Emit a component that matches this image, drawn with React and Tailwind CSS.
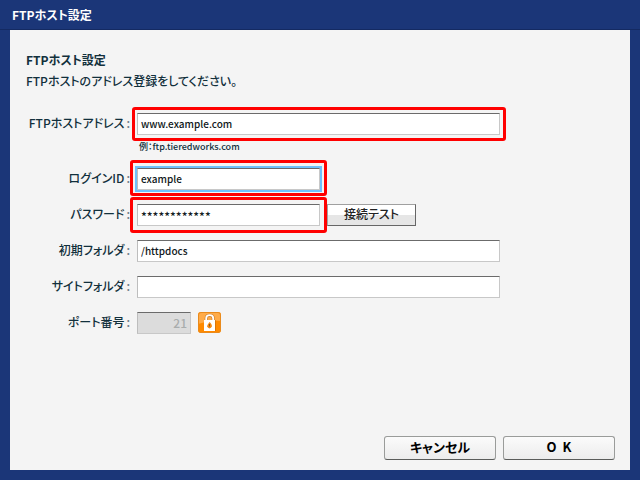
import React, { useState } from "react";

const inputClass =
  "block h-[22px] w-full border border-t-[#6b6b6b] border-l-[#bdbdbd] border-r-[#c8c8c8] border-b-[#c8c8c8] bg-white px-[3px] font-medium text-[#101820] outline-none";

const footerButtonClass =
  "h-6 w-28 rounded-[3px] border border-[#9a9c9a] border-b-[#5a5c5a] bg-linear-to-b from-[#fbfbfb] to-[#ececec] pb-1 text-[13px] leading-none font-bold text-black";

const Field = ({ id, label, hint, children }) => (
  <div className="grid grid-cols-[104px_1fr] gap-x-[7px]">
    <label htmlFor={id} className="text-right text-xs leading-5 font-medium whitespace-nowrap">
      {label}
      <span className="ml-0.5 text-[#6f8088]">:</span>
    </label>
    <div className="flex items-start gap-[7px]">{children}</div>
    {hint && <p className="col-start-2 pt-1 pl-0.5 text-[9px] leading-[15px] font-medium">{hint}</p>}
  </div>
);

const LockIcon = () => (
  <svg viewBox="0 0 23 21" className="h-[21px] w-[23px]" aria-hidden="true">
    <rect width="23" height="21" rx="3" fill="#ff8a00" />
    <path d="M3 0H20Q23 0 23 3V9Q12 8 0 12V3Q0 0 3 0Z" fill="#ffab48" />
    <rect x="0.5" y="0.5" width="22" height="20" rx="2.5" fill="none" stroke="#e98a1c" />
    <path d="M8.2 9V6.3Q8.2 3.2 11.7 3.2T15.2 6.3V9" fill="none" stroke="#a95b10" strokeWidth="3" opacity="0.6" />
    <path d="M8.2 9V6.3Q8.2 3.2 11.7 3.2T15.2 6.3V9" fill="none" stroke="#fff" strokeWidth="1.8" />
    <rect x="6" y="8" width="12" height="11" fill="#c06810" opacity="0.6" />
    <rect x="6" y="8" width="11" height="11" fill="#fff" />
    <path d="M11.5 10Q14.4 12.8 13.8 14.6Q13.2 16.4 11.5 16.4T9.2 14.6Q9.2 12.8 11.5 10Z" fill="#f58a14" />
    <path d="M11.5 12V14.5" stroke="#8d5a20" />
  </svg>
);

const App = () => {
  const [form, setForm] = useState({
    host: "www.example.com",
    login: "example",
    password: "************",
    folder: "/httpdocs",
    siteFolder: "",
    port: "21",
  });
  const [portLocked, setPortLocked] = useState(true);

  const handleChange = (e) => {
    setForm({ ...form, [e.target.name]: e.target.value });
  };

  return (
    <div className="flex min-h-screen flex-col bg-[#1b3678] px-2.5 pb-2.5 font-['Noto_Sans_CJK_JP',sans-serif] text-[#12303c] [font-feature-settings:'palt']">
      {/* Title Bar */}
      <header className="-mx-2.5 flex h-[30px] items-center border-b border-[#142a62] px-3">
        <h1 className="text-xs leading-5 font-bold text-white">FTPホスト設定</h1>
      </header>

      <form
        className="flex flex-1 flex-col bg-[#f4f4f4] px-4 pt-5 pb-2.5"
        onSubmit={(e) => e.preventDefault()}
      >
        <h2 className="text-xs leading-5 font-bold">FTPホスト設定</h2>
        <p className="text-xs leading-[22px] font-medium">FTPホストのアドレス登録をしてください。</p>

        {/* Fields */}
        <div className="mt-[21px] flex flex-col gap-3.5">
          <Field id="host" label="FTPホストアドレス" hint="例：ftp.tieredworks.com">
            <div className="relative w-[363px]">
              <input
                id="host"
                name="host"
                className={`${inputClass} pb-0.5 text-[10px]`}
                value={form.host}
                onChange={handleChange}
              />
              <span className="pointer-events-none absolute -inset-1.5 -left-[5px] rounded-[3px] border-3 border-[#ff0000]" />
            </div>
          </Field>

          <Field id="login" label="ログインID">
            <div className="relative w-[183px]">
              <input
                id="login"
                name="login"
                className={`${inputClass} pb-0.5 text-[10px] ring-2 ring-[#6fc0fb]`}
                value={form.login}
                onChange={handleChange}
              />
              <span className="pointer-events-none absolute -inset-[7px] -top-2 -bottom-1.5 rounded-[3px] border-3 border-[#ff0000]" />
            </div>
          </Field>

          <Field id="password" label="パスワード">
            <div className="relative z-10 w-[183px]">
              <input
                id="password"
                name="password"
                className={`${inputClass} text-xs font-bold`}
                value={form.password}
                onChange={handleChange}
              />
              <span className="pointer-events-none absolute -inset-[7px] rounded-[3px] border-3 border-[#ff0000]" />
            </div>
            <button
              type="button"
              className="h-[22px] w-[89px] border border-[#a0a0a0] border-r-[#666] border-b-[#666] bg-linear-to-b from-white from-50% to-[#e6e6e6] to-50% pb-0.5 text-xs leading-none font-medium text-[#222]"
            >
              接続テスト
            </button>
          </Field>

          <Field id="folder" label="初期フォルダ">
            <div className="w-[363px]">
              <input
                id="folder"
                name="folder"
                className={`${inputClass} pb-0.5 text-[10px]`}
                value={form.folder}
                onChange={handleChange}
              />
            </div>
          </Field>

          <Field id="siteFolder" label="サイトフォルダ">
            <div className="w-[363px]">
              <input
                id="siteFolder"
                name="siteFolder"
                className={`${inputClass} pb-0.5 text-[10px]`}
                value={form.siteFolder}
                onChange={handleChange}
              />
            </div>
          </Field>

          <Field id="port" label="ポート番号">
            <div className="w-[54px]">
              <input
                id="port"
                name="port"
                disabled={portLocked}
                className={`${inputClass} pb-0.5 text-right text-xs disabled:bg-[#dcdcdc] disabled:text-[#a9adad]`}
                value={form.port}
                onChange={handleChange}
              />
            </div>
            <button type="button" aria-label="ポート番号のロック" onClick={() => setPortLocked(!portLocked)}>
              <LockIcon />
            </button>
          </Field>
        </div>

        {/* Footer Buttons */}
        <div className="mt-auto -mr-px flex justify-end gap-[7px]">
          <button type="button" className={footerButtonClass}>
            キャンセル
          </button>
          <button type="submit" className={footerButtonClass}>
            O&nbsp; K
          </button>
        </div>
      </form>
    </div>
  );
};

export default App;
